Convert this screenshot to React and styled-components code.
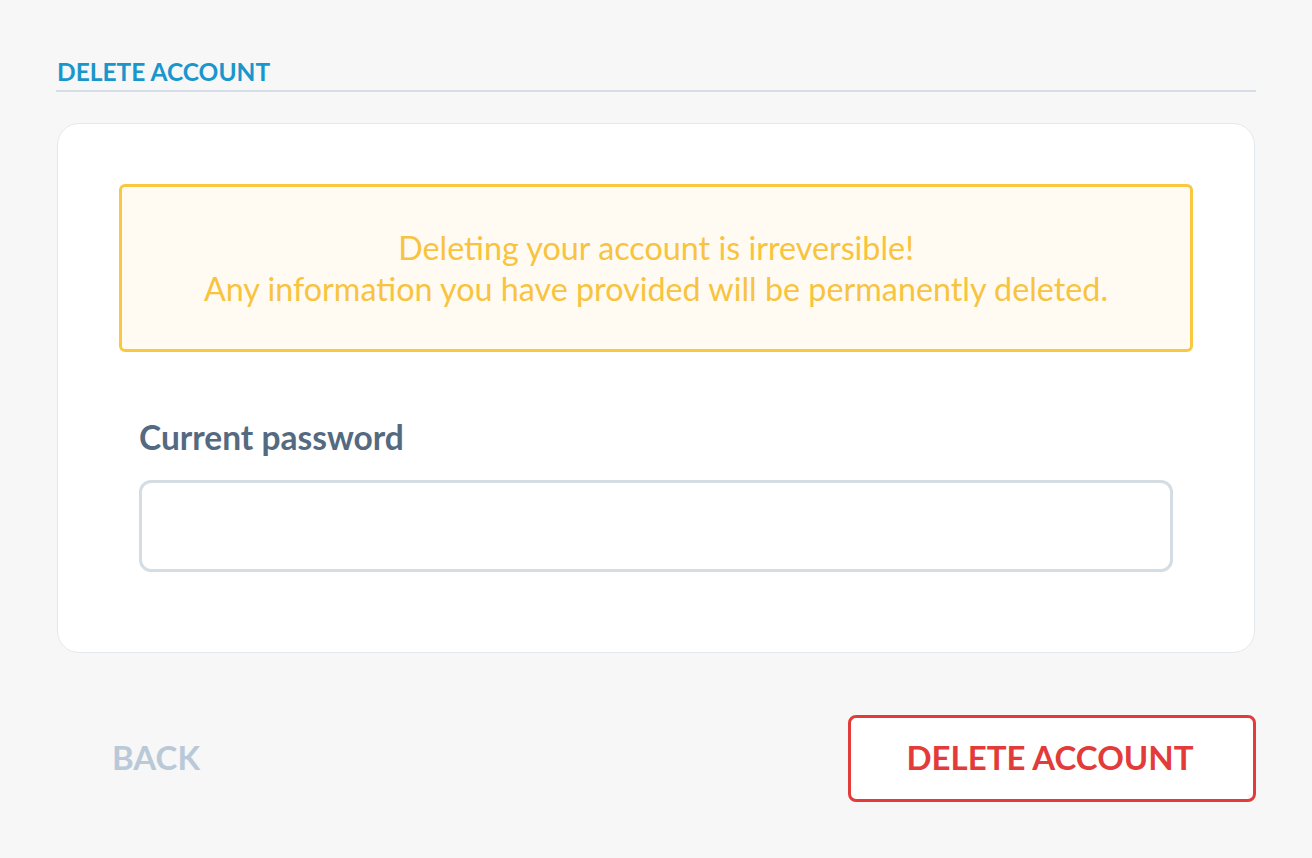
import React from "react";
import styled, { createGlobalStyle } from "styled-components";

const Global = createGlobalStyle`
  html, body { margin: 0; padding: 0; background: #f7f7f7; }
  body { font-family: Lato, "Open Sans", sans-serif; }
  * { box-sizing: border-box; }
`;

const Page = styled.div`
  width: 1312px;
  min-height: 858px;
  padding: 58px 56px 0 56px;
  background: #f7f7f7;
`;

const SectionTitle = styled.h2`
  margin: 0;
  padding: 0 0 4px 1px;
  font-size: 24.5px;
  font-weight: 700;
  line-height: 28px;
  color: #1996cb;
  border-bottom: 2px solid #d5dee6;
`;

const Card = styled.div`
  margin: 31px 1px 0 1px;
  background: #fff;
  border: 1.5px solid #e4e9ee;
  border-radius: 22px;
  padding: 60px 61px 80px 61px;
`;

const Warning = styled.div`
  height: 168px;
  border: 3px solid #f9c740;
  border-radius: 6px;
  background: #fffbf3;
  color: #f8c33e;
  font-size: 32.3px;
  line-height: 41px;
  text-align: center;
  display: flex;
  flex-direction: column;
  justify-content: center;
`;

const Field = styled.div`
  padding: 0 20px;
  margin-top: 65px;
  display: flex;
  flex-direction: column;
`;

const Label = styled.label`
  font-size: 33.5px;
  font-weight: 700;
  line-height: 40px;
  color: #546a80;
`;

const Input = styled.input`
  margin-top: 23px;
  height: 92px;
  border: 3px solid #d4dde4;
  border-radius: 12px;
  background: #fff;
  outline: none;
  font: inherit;
  font-size: 24px;
  padding: 0 20px;
`;

const Footer = styled.div`
  margin-top: 62px;
  display: flex;
  justify-content: space-between;
  align-items: center;
`;

const BackButton = styled.button`
  background: none;
  border: none;
  padding: 0 0 4px 56px;
  font-family: inherit;
  font-size: 33px;
  font-weight: 700;
  color: #b9c9d8;
  cursor: pointer;
`;

const DangerButton = styled.button`
  width: 408px;
  height: 87px;
  padding: 0 4px 3px 0;
  background: #fff;
  border: 3px solid #e23b39;
  border-radius: 8px;
  font-family: inherit;
  font-size: 33px;
  font-weight: 700;
  color: #e23b39;
  cursor: pointer;
`;

export default function App() {
  return (
    <>
      <Global />
      <Page>
        <SectionTitle>DELETE ACCOUNT</SectionTitle>
        <Card>
          <Warning>
            <div>Deleting your account is irreversible!</div>
            <div>Any information you have provided will be permanently deleted.</div>
          </Warning>
          <Field>
            <Label htmlFor="pw">Current password</Label>
            <Input id="pw" type="password" />
          </Field>
        </Card>
        <Footer>
          <BackButton>BACK</BackButton>
          <DangerButton>DELETE ACCOUNT</DangerButton>
        </Footer>
      </Page>
    </>
  );
}
